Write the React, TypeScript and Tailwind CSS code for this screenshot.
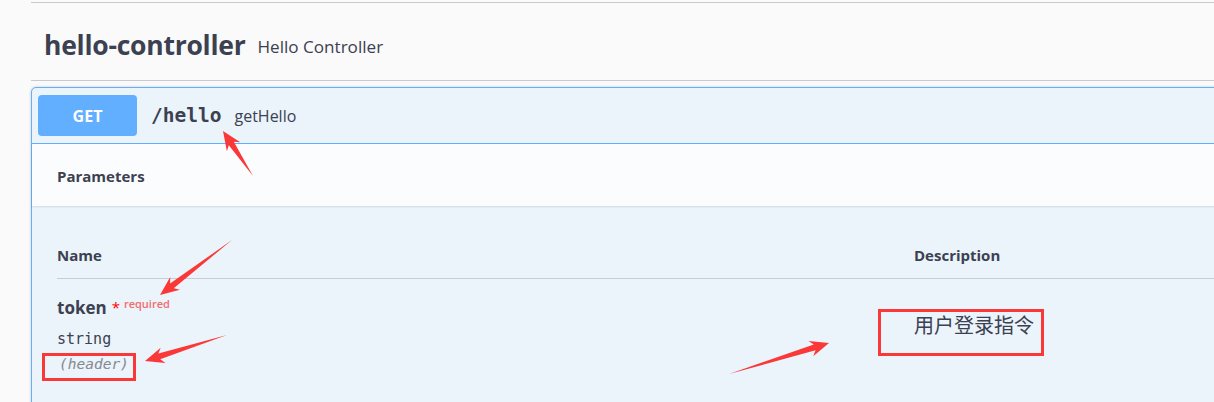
import React from "react";

type Pt = [number, number];

function arrowPoints(tail: Pt, tip: Pt, h = 19, hw = 8, w = 3): string {
  const dx = tip[0] - tail[0];
  const dy = tip[1] - tail[1];
  const L = Math.hypot(dx, dy);
  const ux = dx / L;
  const uy = dy / L;
  const nx = -uy;
  const ny = ux;
  const P = (a: number, b: number): string =>
    `${(tail[0] + ux * a + nx * b).toFixed(2)},${(tail[1] + uy * a + ny * b).toFixed(2)}`;
  return [
    P(0, 0),
    P(L - h + 4, w),
    P(L - h, hw),
    `${tip[0]},${tip[1]}`,
    P(L - h, -hw),
    P(L - h + 4, -w),
  ].join(" ");
}

const arrows: { tail: Pt; tip: Pt }[] = [
  { tail: [253, 176], tip: [223, 131] },
  { tail: [232, 240], tip: [160, 295] },
  { tail: [227, 335], tip: [145, 361] },
  { tail: [729, 374], tip: [829, 343] },
];

const sans = "font-['Open_Sans','Noto_Sans','Noto_Sans_CJK_SC',sans-serif]";
const mono = "font-['DejaVu_Sans_Mono','Liberation_Mono',monospace]";

export default function App() {
  return (
    <div
      className={`relative w-[1214px] h-[402px] overflow-hidden bg-[#fafafa] text-[#3b4151] ${sans}`}
    >
      <div className="w-[1260px] pl-[31px]">
        <div className="mt-[2px] h-px bg-[#c9cad0]" />
        <div className="h-[78px] border-b border-[#c9cad0] flex items-center pl-[13px] pt-[7px]">
          <span className="text-[26.5px] leading-[32px] font-bold tracking-[-0.25px]">hello-controller</span>
          <span className="ml-[12px] text-[17.1px] leading-[24px] pt-[3px]">Hello Controller</span>
        </div>
        <div className="mt-[6px] border border-[#61affe] rounded-[5px] bg-[#ebf3fb] shadow-[0_0_3px_rgba(0,0,0,0.19)]">
          <div className="h-[56px] border-b border-[#61affe] flex items-center px-[6px]">
            <div className="w-[99px] h-[41px] rounded-[4px] bg-[#61affe] flex items-center justify-center text-white text-[16px] font-bold">
              GET
            </div>
            <span className={`ml-[14px] ${mono} text-[19.5px] font-bold leading-[24px] text-[#3b4151]`}>/hello</span>
            <span className="ml-[13px] text-[16px] leading-[24px] text-[#3b4151]">getHello</span>
          </div>
          <div className="h-[62px] bg-[#fbfcfe] shadow-[0_1px_2px_rgba(0,0,0,0.1)] flex items-center px-[25px] pt-[2px]">
            <span className="text-[15px] font-bold leading-[20px]">Parameters</span>
          </div>
          <div className="px-[25px] pb-[40px]">
            <div className="h-[73px] border-b border-[#c8ccd4] flex items-end pb-[14px]">
              <div className="w-[857px] text-[15px] font-bold leading-[18px]">Name</div>
              <div className="text-[15px] font-bold leading-[18px]">Description</div>
            </div>
            <div className="flex">
              <div className="w-[857px] pt-[17px] flex flex-col">
                <div className="flex items-start">
                  <span className="text-[17px] font-bold leading-[24px]">token</span>
                  <span className="ml-[5px] text-[#ff0000] text-[15px] leading-[20px] mt-[1px]">*</span>
                  <span className="ml-[4px] text-[11px] font-semibold leading-[14px] text-[#f36b6f] mt-[1px]">required</span>
                </div>
                <div className={`mt-[9px] ${mono} text-[15px] leading-[20px]`}>string</div>
                <div className={`mt-[5px] pl-[2px] ${mono} text-[14.5px] italic leading-[20px] text-[#86888e]`}>(header)</div>
              </div>
              <div className="pt-[32px]">
                <p className="text-[20px] leading-[28px] font-['Noto_Sans_CJK_SC',sans-serif]">用户登录指令</p>
              </div>
            </div>
          </div>
        </div>
      </div>

      <div className="absolute left-[42px] top-[353px] w-[94px] h-[28px] border-[3px] border-[#fb3838]" />
      <div className="absolute left-[878px] top-[309px] w-[166px] h-[47px] border-[3px] border-[#fb3838]" />

      <svg
        className="absolute left-0 top-0 pointer-events-none"
        width={1214}
        height={402}
        viewBox="0 0 1214 402"
      >
        {arrows.map((a, i) => (
          <polygon key={i} points={arrowPoints(a.tail, a.tip)} fill="#fb3838" />
        ))}
      </svg>
    </div>
  );
}
